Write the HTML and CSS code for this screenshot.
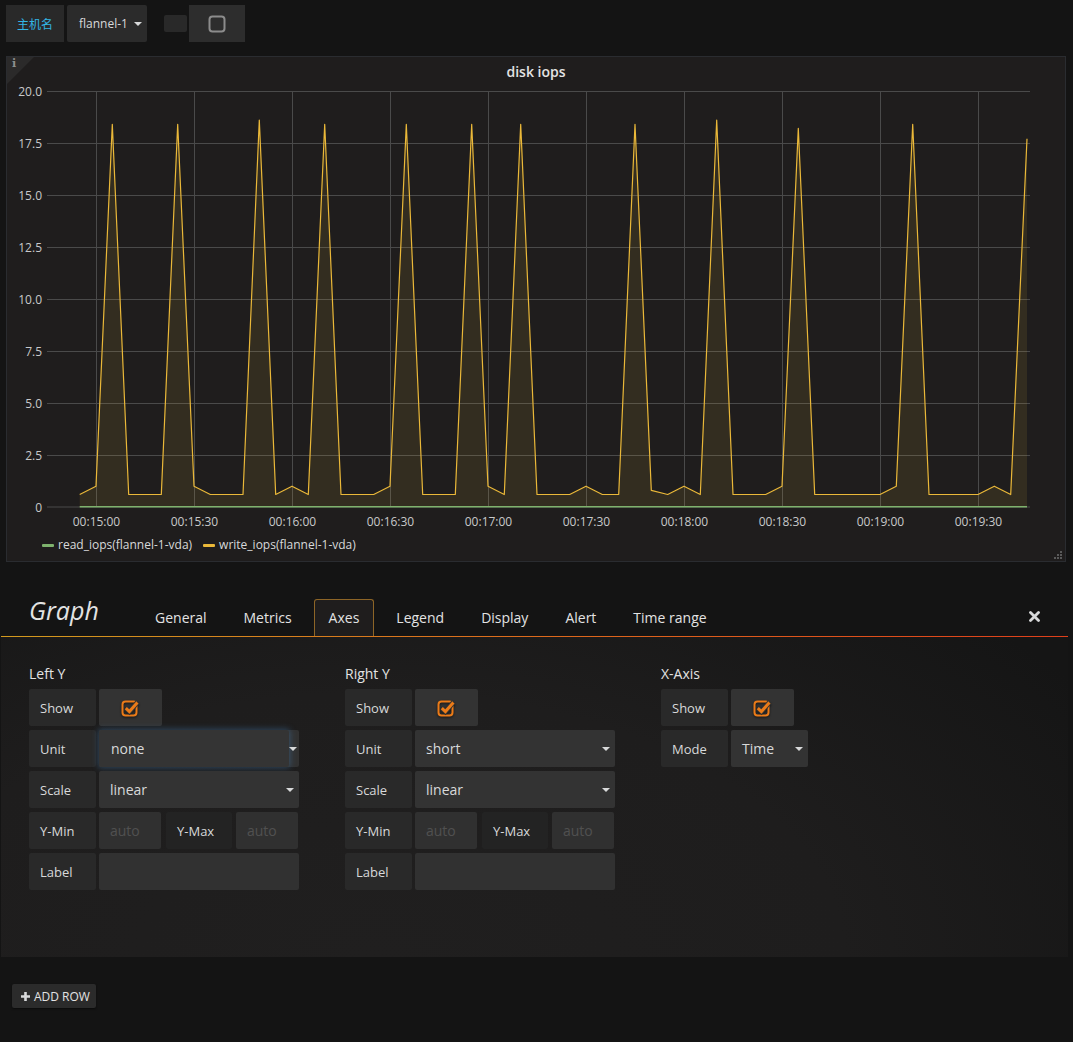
FILE: index.html
```html
<!DOCTYPE html>
<html>
<head>
<meta charset="utf-8">
<link rel="stylesheet" href="styles.css">
</head>
<body>
<div class="topbar">
  <span class="var-label">主机名</span>
  <span class="var-link">flannel-1<i class="caret"></i></span>
  <span class="mini"></span>
  <span class="btn-square"><svg width="18" height="18" viewBox="0 0 18 18"><rect x="1.5" y="1.5" width="15" height="15" rx="3" fill="none" stroke="#8c8c8c" stroke-width="2"/></svg></span>
</div>

<div class="panel">
  <div class="info-corner"></div>
  <span class="info-i">i</span>
  <div class="panel-title">disk iops</div>
  <svg class="chart" width="1058" height="446" viewBox="7 85 1058 446">
    <g class="grid" stroke="#4a4a4a" stroke-width="1">
      <line x1="47" y1="91.5" x2="1030" y2="91.5"/>
      <line x1="47" y1="143.5" x2="1030" y2="143.5"/>
      <line x1="47" y1="195.5" x2="1030" y2="195.5"/>
      <line x1="47" y1="247.5" x2="1030" y2="247.5"/>
      <line x1="47" y1="299.5" x2="1030" y2="299.5"/>
      <line x1="47" y1="351.5" x2="1030" y2="351.5"/>
      <line x1="47" y1="403.5" x2="1030" y2="403.5"/>
      <line x1="47" y1="455.5" x2="1030" y2="455.5"/>
      <line x1="47" y1="507" x2="1030" y2="507"/>
      <line x1="96.5" y1="91" x2="96.5" y2="507"/>
      <line x1="194.5" y1="91" x2="194.5" y2="507"/>
      <line x1="292.5" y1="91" x2="292.5" y2="507"/>
      <line x1="390.5" y1="91" x2="390.5" y2="507"/>
      <line x1="488.5" y1="91" x2="488.5" y2="507"/>
      <line x1="586.5" y1="91" x2="586.5" y2="507"/>
      <line x1="684.5" y1="91" x2="684.5" y2="507"/>
      <line x1="782.5" y1="91" x2="782.5" y2="507"/>
      <line x1="880.5" y1="91" x2="880.5" y2="507"/>
      <line x1="978.5" y1="91" x2="978.5" y2="507"/>
    </g>
    <g class="ylabels" text-anchor="end">
      <text x="42" y="95.5">20.0</text>
      <text x="42" y="147.5">17.5</text>
      <text x="42" y="199.5">15.0</text>
      <text x="42" y="251.5">12.5</text>
      <text x="42" y="303.5">10.0</text>
      <text x="42" y="355.5">7.5</text>
      <text x="42" y="407.5">5.0</text>
      <text x="42" y="459.5">2.5</text>
      <text x="42" y="511.5">0</text>
    </g>
    <g class="xlabels" text-anchor="middle">
      <text x="96.5" y="525.5">00:15:00</text>
      <text x="194.5" y="525.5">00:15:30</text>
      <text x="292.5" y="525.5">00:16:00</text>
      <text x="390.5" y="525.5">00:16:30</text>
      <text x="488.5" y="525.5">00:17:00</text>
      <text x="586.5" y="525.5">00:17:30</text>
      <text x="684.5" y="525.5">00:18:00</text>
      <text x="782.5" y="525.5">00:18:30</text>
      <text x="880.5" y="525.5">00:19:00</text>
      <text x="978.5" y="525.5">00:19:30</text>
    </g>
    <polygon fill="#eab839" fill-opacity="0.1" points="79.7,507 79.7,494.5 96,486.2 112.3,124.3 128.7,494.5 145,494.5 161.3,494.5 177.7,124.3 194,486.2 210.3,494.5 226.7,494.5 243,494.5 259.3,120.1 275.7,494.5 292,486.2 308.3,494.5 324.7,124.3 341,494.5 357.3,494.5 373.7,494.5 390,486.2 406.3,124.3 422.7,494.5 439,494.5 455.3,494.5 471.7,124.3 488,486.2 504.3,494.5 520.7,124.3 537,494.5 553.3,494.5 569.7,494.5 586,486.2 602.3,494.5 618.7,494.5 635,124.3 651.3,490.4 667.7,494.5 684,486.2 700.3,494.5 716.7,120.1 733,494.5 749.3,494.5 765.7,494.5 782,486.2 798.3,128.4 814.7,494.5 831,494.5 847.3,494.5 863.7,494.5 880,494.5 896.3,486.2 912.7,124.3 929,494.5 945.3,494.5 961.7,494.5 978,494.5 994.3,486.2 1010.7,494.5 1027,138.8 1027,507"/>
    <polyline fill="none" stroke="#eab839" stroke-width="1.2" stroke-linejoin="round" points="79.7,494.5 96,486.2 112.3,124.3 128.7,494.5 145,494.5 161.3,494.5 177.7,124.3 194,486.2 210.3,494.5 226.7,494.5 243,494.5 259.3,120.1 275.7,494.5 292,486.2 308.3,494.5 324.7,124.3 341,494.5 357.3,494.5 373.7,494.5 390,486.2 406.3,124.3 422.7,494.5 439,494.5 455.3,494.5 471.7,124.3 488,486.2 504.3,494.5 520.7,124.3 537,494.5 553.3,494.5 569.7,494.5 586,486.2 602.3,494.5 618.7,494.5 635,124.3 651.3,490.4 667.7,494.5 684,486.2 700.3,494.5 716.7,120.1 733,494.5 749.3,494.5 765.7,494.5 782,486.2 798.3,128.4 814.7,494.5 831,494.5 847.3,494.5 863.7,494.5 880,494.5 896.3,486.2 912.7,124.3 929,494.5 945.3,494.5 961.7,494.5 978,494.5 994.3,486.2 1010.7,494.5 1027,138.8"/>
    <line x1="79.7" y1="506.8" x2="1027" y2="506.8" stroke="#7eb26d" stroke-width="1.6"/>
  </svg>
  <div class="legend">
    <span class="legend-item"><i class="swatch green"></i>read_iops(flannel-1-vda)</span>
    <span class="legend-item"><i class="swatch yellow"></i>write_iops(flannel-1-vda)</span>
  </div>
  <svg class="resize" width="8" height="8" viewBox="0 0 8 8" fill="#5a5a5a">
    <rect x="6" y="0" width="2" height="2"/>
    <rect x="3" y="3" width="2" height="2"/><rect x="6" y="3" width="2" height="2"/>
    <rect x="0" y="6" width="2" height="2"/><rect x="3" y="6" width="2" height="2"/><rect x="6" y="6" width="2" height="2"/>
  </svg>
</div>

<div class="editor">
  <div class="editor-header">
    <div class="editor-title">Graph</div>
    <div class="tab">General</div>
    <div class="tab">Metrics</div>
    <div class="tab active">Axes</div>
    <div class="tab">Legend</div>
    <div class="tab">Display</div>
    <div class="tab">Alert</div>
    <div class="tab">Time range</div>
    <svg class="close" width="11" height="11" viewBox="0 0 11 11"><path d="M1.5 1.5 L9.5 9.5 M9.5 1.5 L1.5 9.5" stroke="#d8d9da" stroke-width="2.8" stroke-linecap="round"/></svg>
  </div>
  <div class="editor-body">
    <div class="section">
      <div class="section-title">Left Y</div>
      <div class="row">
        <span class="label">Show</span>
        <span class="switch"><svg width="20" height="20" viewBox="0 0 20 20"><rect x="1.5" y="3.5" width="14" height="14" rx="3" fill="none" stroke="#eb7b18" stroke-width="2"/><path d="M4.8 10.2 L8.4 13.6 L16.4 4.4" fill="none" stroke="#333" stroke-width="5"/><path d="M4.8 10.2 L8.4 13.6 L16.4 4.4" fill="none" stroke="#eb7b18" stroke-width="3"/></svg></span>
      </div>
      <div class="row">
        <span class="label">Unit</span>
        <span class="select focus-wrap"><span class="focus">none</span><i class="caret"></i></span>
      </div>
      <div class="row">
        <span class="label">Scale</span>
        <span class="select"><span class="sel-text">linear</span><i class="caret"></i></span>
      </div>
      <div class="row">
        <span class="label">Y-Min</span>
        <span class="input small">auto</span>
        <span class="label dark">Y-Max</span>
        <span class="input small last">auto</span>
      </div>
      <div class="row">
        <span class="label">Label</span>
        <span class="input wide"></span>
      </div>
    </div>

    <div class="section">
      <div class="section-title">Right Y</div>
      <div class="row">
        <span class="label">Show</span>
        <span class="switch"><svg width="20" height="20" viewBox="0 0 20 20"><rect x="1.5" y="3.5" width="14" height="14" rx="3" fill="none" stroke="#eb7b18" stroke-width="2"/><path d="M4.8 10.2 L8.4 13.6 L16.4 4.4" fill="none" stroke="#333" stroke-width="5"/><path d="M4.8 10.2 L8.4 13.6 L16.4 4.4" fill="none" stroke="#eb7b18" stroke-width="3"/></svg></span>
      </div>
      <div class="row">
        <span class="label">Unit</span>
        <span class="select"><span class="sel-text">short</span><i class="caret"></i></span>
      </div>
      <div class="row">
        <span class="label">Scale</span>
        <span class="select"><span class="sel-text">linear</span><i class="caret"></i></span>
      </div>
      <div class="row">
        <span class="label">Y-Min</span>
        <span class="input small">auto</span>
        <span class="label dark">Y-Max</span>
        <span class="input small last">auto</span>
      </div>
      <div class="row">
        <span class="label">Label</span>
        <span class="input wide"></span>
      </div>
    </div>

    <div class="section">
      <div class="section-title">X-Axis</div>
      <div class="row">
        <span class="label">Show</span>
        <span class="switch"><svg width="20" height="20" viewBox="0 0 20 20"><rect x="1.5" y="3.5" width="14" height="14" rx="3" fill="none" stroke="#eb7b18" stroke-width="2"/><path d="M4.8 10.2 L8.4 13.6 L16.4 4.4" fill="none" stroke="#333" stroke-width="5"/><path d="M4.8 10.2 L8.4 13.6 L16.4 4.4" fill="none" stroke="#eb7b18" stroke-width="3"/></svg></span>
      </div>
      <div class="row">
        <span class="label">Mode</span>
        <span class="select mode"><span class="sel-text">Time</span><i class="caret"></i></span>
      </div>
    </div>
  </div>
</div>

<div class="add-row"><svg width="11" height="11" viewBox="0 0 11 11"><path d="M5.5 1 V10 M1 5.5 H10" stroke="#d8d9da" stroke-width="2.6"/></svg><span>ADD ROW</span></div>
</body>
</html>
```
FILE: styles.css
```css
* { box-sizing: border-box; }

body {
  margin: 0;
  width: 1073px;
  height: 1042px;
  overflow: hidden;
  background: #141414;
  color: #d8d9da;
  font-family: "Open Sans", "Noto Sans CJK SC", sans-serif;
}

/* top bar */
.topbar {
  display: flex;
  align-items: flex-start;
  padding: 5px 0 0 6px;
  height: 42px;
}
.var-label {
  width: 58px;
  height: 37px;
  background: #292929;
  color: #33b5e5;
  font-size: 12px;
  font-family: "Open Sans", "Noto Sans CJK SC", sans-serif;
  display: flex;
  align-items: center;
  justify-content: center;
  margin-right: 3px;
}
.var-link {
  width: 80px;
  height: 37px;
  background: #2b2b2b;
  font-size: 12px;
  padding-left: 12px;
  display: flex;
  align-items: center;
  border-radius: 2px;
}
.var-link .caret { margin-left: 6px; }
.mini {
  width: 23px;
  height: 17px;
  background: #292929;
  margin: 10px 2px 0 17px;
  border-radius: 2px;
}
.btn-square {
  width: 56px;
  height: 37px;
  background: #2d2d2d;
  display: flex;
  align-items: center;
  justify-content: center;
}

.caret {
  display: inline-block;
  width: 0;
  height: 0;
  border-top: 4px solid #d8d9da;
  border-left: 4px solid transparent;
  border-right: 4px solid transparent;
}

/* panel */
.panel {
  position: relative;
  margin: 14px 7px 0 6px;
  height: 506px;
  background: #1f1d1d;
  border: 1px solid #2a2c30;
}
.info-corner {
  position: absolute;
  left: 0;
  top: 0;
  width: 0;
  height: 0;
  border-top: 27px solid #2b2a2a;
  border-right: 27px solid transparent;
}
.info-i {
  position: absolute;
  left: 5px;
  top: 0;
  font-family: "DejaVu Serif", serif;
  font-weight: bold;
  font-size: 11px;
  color: #8e8e8e;
}
.panel-title {
  height: 28px;
  padding-top: 1px;
  line-height: 27px;
  text-align: center;
  font-weight: 600;
  font-size: 14px;
  color: #e3e3e3;
}
.chart { display: block; overflow: visible; }
.chart text {
  font-family: "Open Sans", sans-serif;
  font-size: 12px;
  fill: #c8c9ca;
}
.legend {
  display: flex;
  padding-left: 35px;
  margin-top: 6px;
  font-size: 12px;
  line-height: 16px;
}
.legend-item {
  display: flex;
  align-items: center;
  margin-right: 11px;
}
.swatch {
  display: inline-block;
  width: 12px;
  height: 3px;
  margin-right: 4px;
  border-radius: 1px;
}
.swatch.green { background: #7eb26d; }
.swatch.yellow { background: #eab839; }
.resize {
  position: absolute;
  right: 3px;
  bottom: 2px;
}

/* editor */
.editor { margin: 0 5px 0 1px; }
.editor-header {
  height: 75px;
  display: flex;
  align-items: flex-end;
  border-bottom: 1px solid #d08a1c;
  border-image: linear-gradient(to right, #d29a1e 0%, #dd6a1c 50%, #df3f1a 100%) 1;
}
.editor-title {
  width: 139px;
  padding-left: 28px;
  font-size: 25px;
  font-style: italic;
  line-height: 33px;
  margin-bottom: 9px;
  color: #e3e3e3;
}
.tab {
  height: 37px;
  line-height: 35px;
  padding: 0 14px;
  margin-right: 7px;
  border: 1px solid transparent;
  border-bottom: none;
  border-radius: 3px 3px 0 0;
  font-size: 14px;
  color: #e3e3e3;
}
.tab.active {
  border-color: #8d6527;
  background: #1f1d1d;
}
.close {
  margin-left: auto;
  margin-right: 28px;
  margin-bottom: 14px;
}
.editor-body {
  height: 320px;
  padding: 27px 0 0 28px;
  display: flex;
  background: radial-gradient(ellipse 80% 150% at 35% 100%, #201f1f 0%, #1e1d1d 55%, #151515 100%);
}
.section {
  width: 270px;
  margin-right: 46px;
}
.section-title {
  font-size: 14px;
  line-height: 20px;
  margin-bottom: 5px;
  color: #e3e3e3;
}
.row {
  display: flex;
  height: 37px;
  margin-bottom: 4px;
}
.label {
  width: 67px;
  flex: none;
  background: #292929;
  font-size: 13px;
  padding-left: 11px;
  display: flex;
  align-items: center;
  margin-right: 3px;
  border-radius: 2px;
}
.label.dark {
  width: 66px;
  background: #232323;
  margin-right: 4px;
}
.switch {
  width: 63px;
  background: #333;
  display: flex;
  align-items: center;
  justify-content: center;
  border-radius: 2px;
}
.switch svg { filter: drop-shadow(0 1px 1px rgba(0,0,0,0.6)); }
.select {
  width: 200px;
  background: #333;
  display: flex;
  align-items: center;
  font-size: 14px;
  border-radius: 2px;
}
.sel-text { padding-left: 11px; }
.select .caret { margin-left: auto; margin-right: 5px; }
.select.mode { width: 77px; }
.focus-wrap { background: #313131; }
.focus {
  width: 190px;
  height: 37px;
  display: flex;
  align-items: center;
  padding-left: 12px;
  background: #343434;
  border-radius: 2px;
  box-shadow: 0 0 6px 1px rgba(66, 120, 170, 0.45);
}
.focus-wrap .caret { margin-right: 2px; }
.input {
  background: #303030;
  font-size: 14px;
  color: #505050;
  display: flex;
  align-items: center;
  padding-left: 11px;
  border-radius: 2px;
}
.input.small {
  width: 62px;
  margin-right: 5px;
}
.input.small.last { margin-right: 0; }
.input.wide { width: 200px; background: #313131; }

/* add row */
.add-row {
  margin: 27px 0 0 12px;
  width: 84px;
  height: 24px;
  background: #2b2b2b;
  border-radius: 2px;
  box-shadow: 0 1px 2px rgba(0, 0, 0, 0.5);
  display: flex;
  align-items: center;
  padding-left: 8px;
  font-size: 12px;
  color: #e3e3e3;
}
.add-row svg { margin-right: 3px; }
```
